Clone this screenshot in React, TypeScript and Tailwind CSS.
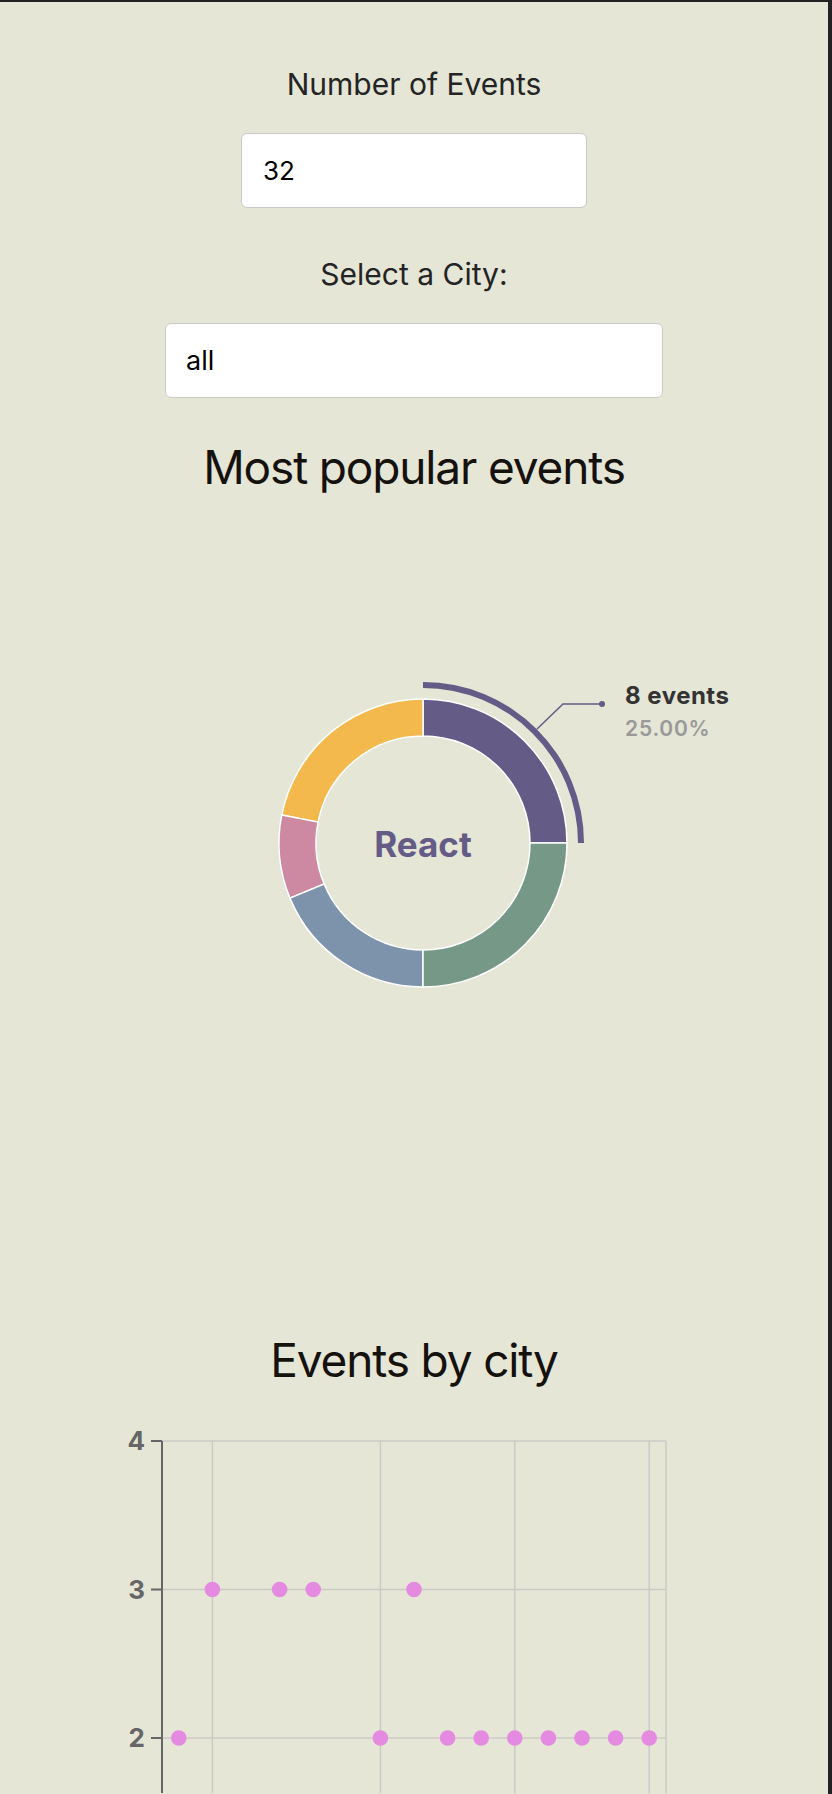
import React from "react";

const GENRES = [
  { name: "React", value: 8, color: "#645b86" },
  { name: "JavaScript", value: 7, color: "#f4b94c" },
  { name: "Node", value: 3, color: "#cd88a2" },
  { name: "jQuery", value: 6, color: "#7c93ab" },
  { name: "Angular", value: 8, color: "#769887" },
];

// events per city, one entry per category on the x axis
const CITIES = [2, 3, 1, 3, 3, 1, 2, 3, 2, 2, 2, 2, 2, 2, 2];

const CX = 423;
const CY = 348;
const R_IN = 107;
const R_OUT = 144;

function point(r: number, deg: number) {
  const rad = (deg * Math.PI) / 180;
  return [CX + r * Math.cos(rad), CY - r * Math.sin(rad)];
}

function sectorPath(r0: number, r1: number, a0: number, a1: number) {
  const [x0, y0] = point(r1, a0);
  const [x1, y1] = point(r1, a1);
  const [x2, y2] = point(r0, a1);
  const [x3, y3] = point(r0, a0);
  const large = a1 - a0 > 180 ? 1 : 0;
  return `M${x0} ${y0} A${r1} ${r1} 0 ${large} 0 ${x1} ${y1} L${x2} ${y2} A${r0} ${r0} 0 ${large} 1 ${x3} ${y3} Z`;
}

function EventGenresChart() {
  const total = GENRES.reduce((sum, g) => sum + g.value, 0);
  let angle = 0;
  const sectors = GENRES.map((g) => {
    const start = angle;
    angle += (g.value / total) * 360;
    return { ...g, start, end: angle };
  });
  const active = sectors[0];

  return (
    <svg width={828} height={837} className="block">
      {sectors.map((s) => (
        <path key={s.name} d={sectorPath(R_IN, R_OUT, s.start, s.end)} fill={s.color} stroke="#fff" strokeWidth={1.5} />
      ))}
      <path d={sectorPath(155, 161, active.start, active.end)} fill={active.color} />
      <path d="M537 234 L563 209 L602 209" fill="none" stroke={active.color} strokeWidth={1.5} />
      <circle cx={602} cy={209} r={3} fill={active.color} />
      <text x={625} y={209} fill="#333" fontSize={24} fontWeight={700} letterSpacing={0.5}>
        {active.value} events
      </text>
      <text x={625} y={241} fill="#999" fontSize={21} fontWeight={600} letterSpacing={0.8}>
        {((active.value / total) * 100).toFixed(2)}%
      </text>
      <text x={CX} y={362} textAnchor="middle" fill={active.color} fontSize={35} fontWeight={700}>
        {active.name}
      </text>
    </svg>
  );
}

function CityScatterChart() {
  const left = 162;
  const right = 666;
  const top = 53;
  const height = 405;
  const unit = 148.5;
  const band = (right - left) / CITIES.length;
  const yFor = (v: number) => top + (4 - v) * unit;
  const gridX = [1, 6, 10, 14].map((i) => left + band * (i + 0.5));

  return (
    <svg width={828} height={height} className="block">
      {[4, 3, 2].map((v) => (
        <line key={v} x1={left} x2={right} y1={yFor(v)} y2={yFor(v)} stroke="#cbcbc6" strokeWidth={1.5} />
      ))}
      {gridX.concat(right).map((x) => (
        <line key={x} x1={x} x2={x} y1={top} y2={height} stroke="#cbcbc6" strokeWidth={1.5} />
      ))}
      <line x1={left} x2={left} y1={top} y2={height} stroke="#666" strokeWidth={2} />
      {[4, 3, 2].map((v) => (
        <g key={v}>
          <line x1={151} x2={left} y1={yFor(v)} y2={yFor(v)} stroke="#666" strokeWidth={2} />
          <text x={145} y={yFor(v) + 9} textAnchor="end" fill="#666" fontSize={26} fontWeight={700}>
            {v}
          </text>
        </g>
      ))}
      {CITIES.map((v, i) => (
        <circle key={i} cx={left + band * (i + 0.5)} cy={yFor(v)} r={7.8} fill="#e48ae0" />
      ))}
    </svg>
  );
}

export default function App() {
  return (
    <div
      className="h-[1794px] w-[832px] overflow-hidden border-t-2 border-r-4 border-[#222] bg-[#e5e6d6]"
      style={{ fontFamily: "Inter, 'Noto Sans', sans-serif" }}
    >
      <div className="flex flex-col items-center pt-16">
        <div className="h-9 text-[30px] leading-9 text-[#242424]">Number of Events</div>
        <input
          readOnly
          value="32"
          className="mt-[31px] h-[75px] w-[346px] rounded-md border border-[#c9c9c9] bg-white px-[21px] text-[26px] text-black outline-none"
        />
        <div className="mt-[48px] h-9 text-[30px] leading-9 text-[#242424]">Select a City:</div>
        <input
          readOnly
          value="all"
          className="mt-[31px] h-[75px] w-[498px] rounded-md border border-[#c9c9c9] bg-white px-[20px] text-[27px] text-black outline-none"
        />
        <h2 className="mt-[41px] h-14 text-[46px] leading-[56px] tracking-tight text-[#15110d]">Most popular events</h2>
      </div>
      <EventGenresChart />
      <h2 className="h-14 text-center text-[46px] leading-[56px] tracking-tight text-[#15110d]">Events by city</h2>
      <CityScatterChart />
    </div>
  );
}
